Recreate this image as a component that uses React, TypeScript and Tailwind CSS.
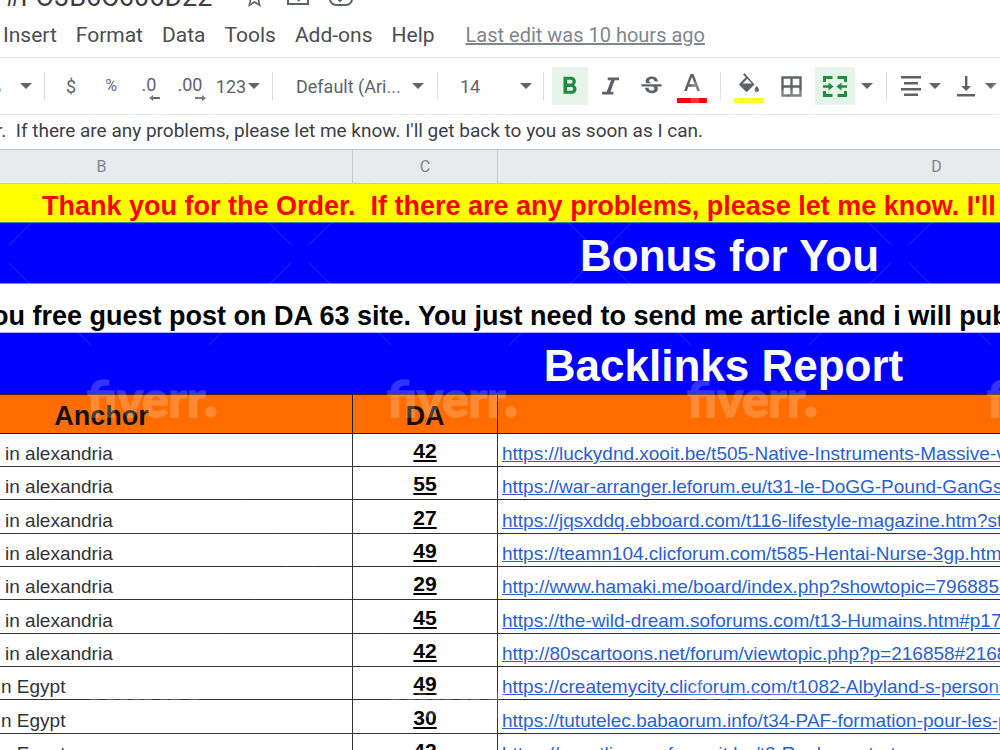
import type { ReactNode } from "react";
import { MdStrikethroughS, MdFormatBold, MdFormatColorFill, MdStarBorder } from "react-icons/md";

const menus = ["Insert", "Format", "Data", "Tools", "Add-ons", "Help"];

const rows = [
  { anchor: "in alexandria", da: "42", url: "https://luckydnd.xooit.be/t505-Native-Instruments-Massive-v1.htm" },
  { anchor: "in alexandria", da: "55", url: "https://war-arranger.leforum.eu/t31-le-DoGG-Pound-GanGsta.htm" },
  { anchor: "in alexandria", da: "27", url: "https://jqsxddq.ebboard.com/t116-lifestyle-magazine.htm?start=0" },
  { anchor: "in alexandria", da: "49", url: "https://teamn104.clicforum.com/t585-Hentai-Nurse-3gp.htm" },
  { anchor: "in alexandria", da: "29", url: "http://www.hamaki.me/board/index.php?showtopic=7968851" },
  { anchor: "in alexandria", da: "45", url: "https://the-wild-dream.soforums.com/t13-Humains.htm#p171" },
  { anchor: "in alexandria", da: "42", url: "http://80scartoons.net/forum/viewtopic.php?p=216858#216858" },
  { anchor: "n Egypt", da: "49", url: "https://createmycity.clicforum.com/t1082-Albyland-s-person.htm" },
  { anchor: "n Egypt", da: "30", url: "https://tututelec.babaorum.info/t34-PAF-formation-pour-les-pros.htm" },
  { anchor: "n Egypt", da: "42", url: "https://wrestling-p-gfx.xooit.be/t2-Reglement-et-annonces-s.htm" },
];

function Caret() {
  return (
    <svg width="12" height="6" viewBox="0 0 12 6" fill="#666" aria-hidden="true">
      <path d="M0 0h12L6 6z" />
    </svg>
  );
}

function CaretButton({ label, className = "w-[18px]" }: { label: string; className?: string }) {
  return (
    <button aria-label={label} className={`flex h-9 shrink-0 items-center justify-center ${className}`}>
      <Caret />
    </button>
  );
}

function Divider({ className }: { className: string }) {
  return (
    <div className={`flex shrink-0 justify-center ${className}`}>
      <div className="h-7 w-px bg-[#dadce0]" />
    </div>
  );
}

function Tool({ label, className, children }: { label: string; className: string; children: ReactNode }) {
  return (
    <button aria-label={label} className={`flex h-[38px] shrink-0 items-center justify-center ${className}`}>
      {children}
    </button>
  );
}

function DecimalTool({ label, text, right, className }: { label: string; text: string; right?: boolean; className: string }) {
  return (
    <button aria-label={label} className={`flex h-[38px] shrink-0 flex-col items-center justify-center ${className}`}>
      <span className="flex flex-col items-end pt-1">
        <span className="pr-1 leading-5">{text}</span>
        <svg width="11" height="6" viewBox="0 0 11 6" fill="#5f6368" aria-hidden="true">
          {right ? <path d="M11 3 7 0v2H0v2h7v2z" /> : <path d="M0 3 4 0v2h7v2H4v2z" />}
        </svg>
      </span>
    </button>
  );
}

function Watermark() {
  return (
    <svg className="pointer-events-none absolute inset-0 h-full w-full" aria-hidden="true">
      <defs>
        <pattern id="mark" width="300" height="300" patternUnits="userSpaceOnUse" x="0" y="-46">
          <g stroke="#fff" strokeOpacity="0.16" strokeWidth="1">
            <path d="M9 9 91 91M291 9 209 91M9 291 91 209M291 291 209 209" />
          </g>
          <g fill="#fbfbfb" stroke="#fbfbfb" strokeWidth="1.500" opacity="0.2">
            <text x="87" y="163" fontFamily="Lato, sans-serif" fontWeight="900" fontSize="49">
              fiverr
            </text>
            <circle cx="211" cy="158" r="5" />
          </g>
        </pattern>
      </defs>
      <rect width="100%" height="100%" fill="url(#mark)" />
    </svg>
  );
}

export default function App() {
  return (
    <div className="relative flex h-screen flex-col overflow-hidden bg-white font-[Roboto,sans-serif] text-[#5f6368]">
      <header className="shrink-0">
        <div className="flex h-3 items-end pl-1">
          <h1 className="text-[27px] leading-[30px] text-[#3c4043]">#FO3B6C606D22</h1>
          <div className="flex items-end gap-5 pb-0.5 pl-[30px]">
            <button aria-label="Star">
              <MdStarBorder size={25} />
            </button>
            <button aria-label="Move" className="pb-[5px]">
              <svg width="22" height="20" viewBox="0 0 22 20" fill="none" stroke="#5f6368" strokeWidth="2">
                <path d="M1 1h7l2 3h11v15H1zM8 12h7M11 9l4 3-4 4" />
              </svg>
            </button>
            <button aria-label="Document status" className="pb-1">
              <svg width="24" height="18" viewBox="0 0 24 18" fill="none" stroke="#5f6368" strokeWidth="2">
                <rect x="1" y="1" width="22" height="16" rx="6" />
                <path d="m8 10 3 3 5-6" />
              </svg>
            </button>
          </div>
        </div>
        <nav className="flex h-[45px] items-center gap-[19px] pl-[3px] text-[21px] text-[#4a4d51]">
          {menus.map((m) => (
            <button key={m} className="leading-6">
              {m}
            </button>
          ))}
          <a href="#history" className="pl-3 text-[20px] leading-6 whitespace-nowrap text-[#80868b] underline">
            Last edit was 10 hours ago
          </a>
        </nav>
      </header>

      <div role="toolbar" className="flex h-[58px] shrink-0 items-center border-y border-[#e4e5e7] text-[18px]">
        <span className="w-3.5 shrink-0 overflow-hidden">
          <span className="-ml-3">%</span>
        </span>
        <CaretButton label="Zoom" className="w-6" />
        <Divider className="w-3" />
        <Tool label="Format as currency" className="w-[42px]">$</Tool>
        <Tool label="Format as percent" className="w-[38px] text-[16px]">%</Tool>
        <DecimalTool label="Decrease decimal places" text=".0" className="w-[42px]" />
        <DecimalTool label="Increase decimal places" text=".00" right className="w-10" />
        <Tool label="More formats" className="w-[52px] gap-0.5">
          123
          <Caret />
        </Tool>
        <Divider className="w-4" />
        <label className="relative flex w-[148px] shrink-0 items-center">
          <select aria-label="Font" className="w-full appearance-none bg-transparent pl-4 outline-none">
            <option>Default (Ari...</option>
          </select>
          <span className="pointer-events-none absolute right-1">
            <Caret />
          </span>
        </label>
        <Divider className="w-[18px]" />
        <label className="relative flex w-[90px] shrink-0 items-center">
          <select aria-label="Font size" className="w-full appearance-none bg-transparent pl-3.5 outline-none">
            <option>14</option>
          </select>
          <span className="pointer-events-none absolute right-1">
            <Caret />
          </span>
        </label>
        <Divider className="w-3.5" />
        <Tool label="Bold" className="mx-0.5 w-9 bg-[#e6f4ea] pr-0.5 text-[#1e8e3e]">
          <MdFormatBold size={29} />
        </Tool>
        <Tool label="Italic" className="w-[41px]">
          <svg width="17" height="18" viewBox="0 0 18 18" fill="#5f6368" aria-hidden="true">
            <path d="M6 0h12v3h-4.500L9 15h3v3H0v-3h5L9.500 3H6z" />
          </svg>
        </Tool>
        <Tool label="Strikethrough" className="w-10">
          <MdStrikethroughS size={27} />
        </Tool>
        <Tool label="Text color" className="w-[41px] pt-1">
          <svg width="30" height="29" viewBox="0 0 30 29" aria-hidden="true">
            <path d="M13.500 0h3L23 17h-2.800l-1.600-4.300h-7.200L9.800 17H7zM12.300 10.300h5.400L15 3z" fill="#5f6368" />
            <path d="M0 24h30v5H0z" fill="#f00" />
          </svg>
        </Tool>
        <Divider className="w-4" />
        <Tool label="Fill color" className="w-[42px] pt-1">
          <svg width="30" height="30" viewBox="0 0 30 30" aria-hidden="true">
            <path
              d="M10.500 0 9 1.500l2.800 2.800-6 6a1.500 1.500 0 0 0 0 2.200l5.700 5.700a1.500 1.500 0 0 0 2.200 0l6.800-6.800zM13.300 5.800l4.500 4.700H8.700z"
              fill="#5f6368"
              fillRule="evenodd"
            />
            <path d="M22.800 13s-2.300 2.500-2.300 4a2.200 2.200 0 0 0 4.500 0c0-1.500-2.200-4-2.200-4z" fill="#5f6368" />
            <path d="M0 25h30v5H0z" fill="#ff0" />
          </svg>
        </Tool>
        <Tool label="Borders" className="w-[42px]">
          <svg width="21" height="21" viewBox="0 0 21 21" fill="none" stroke="#5f6368" strokeWidth="2.400" aria-hidden="true">
            <path d="M1.500 1.500h18v18h-18zM10.500 1.500v18M1.500 10.500h18" />
          </svg>
        </Tool>
        <Tool label="Merge cells" className="mx-[3px] w-10 bg-[#e6f4ea]">
          <svg width="24" height="21" viewBox="0 0 24 21" aria-hidden="true">
            <path
              d="M1.500 6V1.500h8M14.500 1.500h8V6M22.500 15v4.500h-8M9.500 19.500h-8V15"
              fill="none"
              stroke="#1e8e3e"
              strokeWidth="3"
            />
            <path d="M0 9.300h5.500V6.500l5 4-5 4v-2.800H0zM24 9.300h-5.500V6.500l-5 4 5 4v-2.800H24z" fill="#1e8e3e" />
          </svg>
        </Tool>
        <CaretButton label="Merge options" />
        <Divider className="w-5" />
        <Tool label="Horizontal align" className="w-[30px]">
          <svg width="20" height="20" viewBox="0 0 20 20" fill="#5f6368" aria-hidden="true">
            <path d="M0 0h20v2.500H0zM3 6h14v2.500H3zM0 12h20v2.500H0zM3 17.500h14V20H3z" />
          </svg>
        </Tool>
        <CaretButton label="Horizontal align options" />
        <Tool label="Vertical align" className="ml-1.5 w-8">
          <svg width="18" height="21" viewBox="0 0 18 21" fill="#5f6368" aria-hidden="true">
            <path d="M8 0h2.400v10H14l-4.800 5-4.800-5H8zM0 18h18v2.500H0z" />
          </svg>
        </Tool>
        <CaretButton label="Vertical align options" />
      </div>

      <input
        aria-label="Formula"
        defaultValue={"r.  If there are any problems, please let me know. I'll get back to you as soon as I can."}
        className="-ml-1 h-[34px] shrink-0 pb-1 text-[19px] text-[#3c4043] outline-none"
      />

      <main className="min-h-0 flex-1 overflow-hidden font-['Liberation_Sans',sans-serif]">
        <table className="w-[1375px] table-fixed border-separate border-spacing-0 whitespace-nowrap">
          <colgroup>
            <col className="w-[353px]" />
            <col className="w-[145px]" />
            <col />
          </colgroup>
          <thead>
            <tr className="h-[35px] bg-[#e8eaed] font-[Roboto,sans-serif] text-[16px] text-[#80868b]">
              <th className="border-y border-r border-[#c6c7c9] pr-[149px] font-normal">B</th>
              <th className="border-y border-r border-[#c6c7c9] font-normal">C</th>
              <th className="border-y border-[#c6c7c9] font-normal">D</th>
            </tr>
          </thead>
          <tbody>
            <tr className="h-[39px] bg-[#ff0] text-[#f00]">
              <td colSpan={3} className="border-b border-[#3a8a8a] pt-1.5 pl-[42px] text-[27px] leading-8 font-bold whitespace-pre">
                {"Thank you for the Order.  If there are any problems, please let me know. I'll get back to you"}
              </td>
            </tr>
            <tr className="h-[61px] bg-[#00f] text-white">
              <td colSpan={3} className="border-b border-[#7d7dff] pt-1.5 pl-[84px] text-center text-[44px] leading-[52px] font-bold">
                Bonus for You
              </td>
            </tr>
            <tr className="h-[49px] text-black">
              <td colSpan={3} className="border-b border-[#b0b0ff] pt-4 text-[27px] leading-8 font-bold">
                <span className="-ml-2">ou free guest post on DA 63 site. You just need to send me article and i will publish</span>
              </td>
            </tr>
            <tr className="h-[62px] bg-[#00f] text-white">
              <td colSpan={3} className="border-b border-[#442211] pt-1 pl-[72px] text-center text-[44px] leading-[52px] font-bold">
                Backlinks Report
              </td>
            </tr>
            <tr className="h-[39px] bg-[#ff6d01] text-[27px] leading-8 text-[#111]">
              <td className="border-r border-b border-[#222] pt-1 pr-[149px] text-center font-bold">Anchor</td>
              <td className="border-r border-b border-[#222] pt-1 text-center font-bold">DA</td>
              <td className="border-b border-[#222]" />
            </tr>
          </tbody>
          <tbody>
            {rows.map((r, i) => (
              <tr key={i} className="h-[33px] leading-6 [&:nth-child(3n)]:h-[34px]">
                <td className={`border-r border-b border-[#333] align-bottom text-[19px] text-[#333] ${r.anchor === "n Egypt" ? "pl-px" : "pl-[5px]"}`}>
                  {r.anchor}
                </td>
                <td className="border-r border-b border-[#333] pb-[3px] text-center align-bottom text-[21px] font-bold text-black underline">
                  {r.da}
                </td>
                <td className="border-b border-[#333] pl-1 align-bottom text-[19px]">
                  <a href={r.url} className="text-[#2a5fcf] underline">
                    {r.url}
                  </a>
                </td>
              </tr>
            ))}
          </tbody>
        </table>
      </main>
      <Watermark />
    </div>
  );
}
